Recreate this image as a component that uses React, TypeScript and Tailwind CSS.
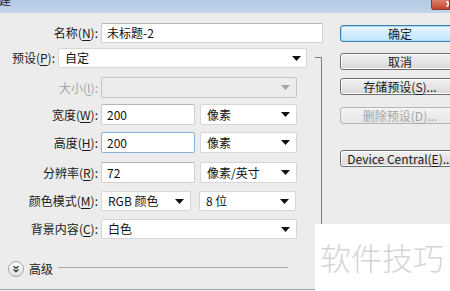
import React from "react";

function Arrow({ disabled }: { disabled?: boolean }) {
  return (
    <svg width="9" height="5" viewBox="0 0 9 5">
      <path d="M0 0H9L4.5 5Z" fill={disabled ? "#a3a3a3" : "#111111"} />
    </svg>
  );
}

function Label({ main, k, disabled }: { main: string; k: string; disabled?: boolean }) {
  return (
    <span className={disabled ? "text-[#a5a5a5]" : "text-[#1a1a1a]"}>
      {main}(<span className="underline underline-offset-2">{k}</span>):
    </span>
  );
}

function Input({ value, w, focused }: { value: string; w: string; focused?: boolean }) {
  return (
    <div
      className={
        "h-full flex items-center pl-[5px] bg-white rounded-[2px] border text-[#111] " +
        w +
        (focused ? " border-[#8db2d8]" : " border-[#cfcfcf] border-t-[#b5b5b5]")
      }
    >
      {value}
    </div>
  );
}

function Select({ value, w, disabled, pr }: { value: string; w: string; disabled?: boolean; pr?: string }) {
  return (
    <div
      className={
        "h-full flex items-center justify-between pl-[6px] rounded-[2px] border " +
        w +
        " " +
        (pr ?? "pr-[6px]") +
        (disabled ? " bg-[#ececec] border-[#c4c4c4]" : " bg-white border-[#d6d6d6]")
      }
    >
      <span className="text-[#111]">{value}</span>
      <Arrow disabled={disabled} />
    </div>
  );
}

function Btn({ text, primary, disabled, mt }: { text: React.ReactNode; primary?: boolean; disabled?: boolean; mt: string }) {
  return (
    <div
      className={
        "w-[120px] h-[17px] shrink-0 rounded-[3px] border flex items-center justify-center whitespace-nowrap leading-none " +
        mt +
        (primary
          ? " border-[#3c7fb1] bg-gradient-to-b from-[#eaf6fd] to-[#bee6fd] text-[#1a1a1a] shadow-[inset_0_0_0_1px_#a9dbf6]"
          : disabled
          ? " border-[#b5b5b5] bg-gradient-to-b from-[#f4f4f4] to-[#e6e6e6] text-[#a5a5a5]"
          : " border-[#707070] bg-gradient-to-b from-[#f2f2f2] to-[#d8d8d8] text-[#1a1a1a] shadow-[inset_0_0_0_1px_#fbfbfb]")
      }
    >
      {text}
    </div>
  );
}

export default function App() {
  return (
    <div className="w-[450px] h-[291px] overflow-hidden relative bg-[#ececec] font-['Noto_Sans_CJK_SC',sans-serif] text-[12px] leading-none">
      {/* title bar */}
      <div className="h-[13px] flex justify-between bg-gradient-to-b from-[#b3cae3] to-[#c2d5ea] overflow-hidden">
        <span className="text-[12px] leading-[12px] -mt-[6px] -ml-[1px] text-[#222]">建</span>
        <div className="w-[19px] h-[10px] rounded-bl-[3px] border border-t-0 border-[#8e3b2f] bg-gradient-to-b from-[#d9806d] to-[#c5412d] flex items-start justify-end overflow-hidden">
          <span className="text-white text-[9px] leading-[8px] font-bold -mr-[2px]">x</span>
        </div>
      </div>

      {/* body */}
      <div className="flex h-[277px] border-b border-[#a9a9a9]">
        {/* form column */}
        <div className="w-[340px] shrink-0 flex flex-col">
          {/* 名称 */}
          <div className="flex items-center h-[20px] mt-[10px]">
            <div className="w-[98px] text-right">
              <Label main="名称" k="N" />
            </div>
            <div className="ml-[3px] h-full">
              <Input value="未标题-2" w="w-[222px]" />
            </div>
          </div>

          {/* group with bracket */}
          <div className="flex">
            <div className="w-[307px] flex flex-col">
              {/* 预设 */}
              <div className="flex items-center h-[20px] mt-[5px]">
                <div className="w-[55px] text-right">
                  <Label main="预设" k="P" />
                </div>
                <div className="ml-[3px] h-full">
                  <Select value="自定" w="w-[249px]" pr="pr-[5px]" />
                </div>
              </div>
              {/* 大小 */}
              <div className="flex items-center h-[21px] mt-[9px]">
                <div className="w-[98px] text-right">
                  <Label main="大小" k="I" disabled />
                </div>
                <div className="ml-[3px] h-full">
                  <Select value="" w="w-[196px]" disabled />
                </div>
              </div>
              {/* 宽度 */}
              <div className="flex items-center h-[21px] mt-[6px]">
                <div className="w-[98px] text-right">
                  <Label main="宽度" k="W" />
                </div>
                <div className="ml-[3px] h-full">
                  <Input value="200" w="w-[94px]" />
                </div>
                <div className="ml-[5px] h-full">
                  <Select value="像素" w="w-[97px]" />
                </div>
              </div>
              {/* 高度 */}
              <div className="flex items-center h-[21px] mt-[7px]">
                <div className="w-[98px] text-right">
                  <Label main="高度" k="H" />
                </div>
                <div className="ml-[3px] h-full">
                  <Input value="200" w="w-[94px]" focused />
                </div>
                <div className="ml-[5px] h-full">
                  <Select value="像素" w="w-[97px]" />
                </div>
              </div>
              {/* 分辨率 */}
              <div className="flex items-center h-[21px] mt-[9px]">
                <div className="w-[98px] text-right">
                  <Label main="分辨率" k="R" />
                </div>
                <div className="ml-[3px] h-full">
                  <Input value="72" w="w-[94px]" />
                </div>
                <div className="ml-[5px] h-full">
                  <Select value="像素/英寸" w="w-[97px]" />
                </div>
              </div>
              {/* 颜色模式 */}
              <div className="flex items-center h-[20px] mt-[8px]">
                <div className="w-[98px] text-right">
                  <Label main="颜色模式" k="M" />
                </div>
                <div className="ml-[3px] h-full">
                  <Select value="RGB 颜色" w="w-[90px]" />
                </div>
                <div className="ml-[8px] h-full">
                  <Select value="8 位" w="w-[97px]" />
                </div>
              </div>
              {/* 背景内容 */}
              <div className="flex items-center h-[20px] mt-[8px]">
                <div className="w-[98px] text-right">
                  <Label main="背景内容" k="C" />
                </div>
                <div className="ml-[3px] h-full">
                  <Select value="白色" w="w-[196px]" />
                </div>
              </div>
            </div>
            <div className="ml-[8px] w-[7px] mt-[14px] border-t border-r border-[#7f7f7f]" />
          </div>

          {/* 高级 */}
          <div className="flex items-center mt-[22px] pl-[8px]">
            <div className="w-[16px] h-[16px] rounded-full border border-[#a8a8a8] bg-gradient-to-b from-white to-[#e2e2e2] flex items-center justify-center">
              <svg width="8" height="8" viewBox="0 0 8 8">
                <path d="M1.5 1.2L4 3.4L6.5 1.2M1.5 4.4L4 6.6L6.5 4.4" stroke="#333" strokeWidth="1.3" fill="none" />
              </svg>
            </div>
            <span className="ml-[5px] text-[#1a1a1a]">高级</span>
            <div className="ml-[5px] w-[230px] h-px bg-[#a8a8a8] -mt-[3px]" />
          </div>
        </div>

        {/* buttons column */}
        <div className="flex flex-col">
          <Btn text="确定" primary mt="mt-[12px]" />
          <Btn text="取消" mt="mt-[11px]" />
          <Btn
            text={
              <>
                存储预设(<span className="underline underline-offset-2">S</span>)...
              </>
            }
            mt="mt-[8px]"
          />
          <Btn
            text={
              <>
                删除预设(<span className="underline underline-offset-2">D</span>)...
              </>
            }
            disabled
            mt="mt-[12px]"
          />
          <Btn
            text={
              <>
                Device Central(<span className="underline underline-offset-2">E</span>)...
              </>
            }
            mt="mt-[26px]"
          />
        </div>
      </div>

      {/* watermark overlay */}
      <div className="absolute left-[315px] top-[224px] w-[135px] h-[67px] bg-white pl-[5px] pt-[16px]">
        <span className="text-[31px] leading-[34px] font-light text-[#d5d5d5] whitespace-nowrap">软件技巧</span>
      </div>
    </div>
  );
}
